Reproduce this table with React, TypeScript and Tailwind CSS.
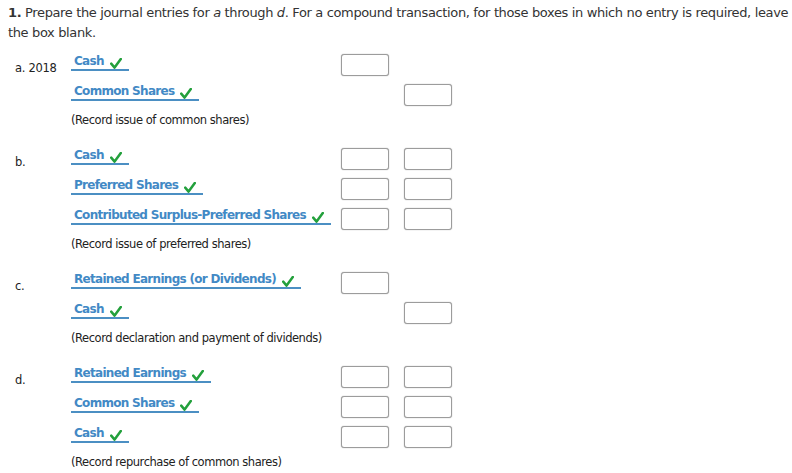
import React from "react";

type Row = { label?: string; side?: "dr" | "cr"; note?: string };
type Entry = { letter: string; rows: Row[]; note: string };

const ENTRIES: Entry[] = [
  {
    letter: "a. 2018",
    rows: [
      { label: "Cash", side: "dr" },
      { label: "Common Shares", side: "cr" },
    ],
    note: "(Record issue of common shares)",
  },
  {
    letter: "b.",
    rows: [
      { label: "Cash", side: "dr" },
      { label: "Preferred Shares", side: "cr" },
      { label: "Contributed Surplus-Preferred Shares", side: "cr" },
    ],
    note: "(Record issue of preferred shares)",
  },
  {
    letter: "c.",
    rows: [
      { label: "Retained Earnings (or Dividends)", side: "dr" },
      { label: "Cash", side: "cr" },
    ],
    note: "(Record declaration and payment of dividends)",
  },
  {
    letter: "d.",
    rows: [
      { label: "Retained Earnings", side: "dr" },
      { label: "Common Shares", side: "dr" },
      { label: "Cash", side: "cr" },
    ],
    note: "(Record repurchase of common shares)",
  },
];

// b and d show both boxes on every line
const BOTH = new Set(["b.", "d."]);

export default function App() {
  return (
    <div className="w-[792px] min-h-[473px] bg-white pl-[8px] pt-[3px] text-[#333]">
      <p className="w-[784px] text-[13px] leading-[20px] font-['DejaVu_Sans',Verdana,sans-serif] tracking-[-0.36px]">
        <b>1.</b> Prepare the journal entries for <i>a</i> through <i>d</i>. For a compound transaction, for those boxes in which no entry is required, leave the box blank.
      </p>

      <div className="mt-[7px]">
        {ENTRIES.map((e) => (
          <Section key={e.letter} entry={e} both={BOTH.has(e.letter)} />
        ))}
      </div>
    </div>
  );
}

function Section({ entry, both }: { entry: Entry; both: boolean }) {
  return (
    <div className="flex ml-[7px] mb-[14px]">
      <div className="w-[56px] shrink-0 pt-[8px] text-[11.5px] leading-[20px] text-[#222] font-['DejaVu_Sans',sans-serif] tracking-[-0.3px]">
        {entry.letter}
      </div>
      <div className="flex flex-col">
        {entry.rows.map((r, i) => (
          <div key={i} className="flex h-[30px]">
            <div className="w-[270px] shrink-0 pt-[4px] flex items-start">
              <AccountLabel text={r.label ?? ""} />
            </div>
            <div className="w-[48px] shrink-0 pt-[4px]">
              {(both || r.side === "dr") && <AmountBox />}
            </div>
            <div className="w-[48px] ml-[15px] shrink-0 pt-[4px]">
              {(both || r.side === "cr") && <AmountBox />}
            </div>
          </div>
        ))}
        <div className="h-[20px] leading-[20px] text-[11.5px] text-[#222] font-['DejaVu_Sans',sans-serif] tracking-[-0.45px]">
          {entry.note}
        </div>
      </div>
    </div>
  );
}

function AccountLabel({ text }: { text: string }) {
  return (
    <div className="flex items-end pl-[3px] pr-[7px] pb-[1px] border-b-2 border-[#4b8fc3]">
      <span className="text-[12px] leading-[14px] font-bold text-[#4289c5] font-['DejaVu_Sans',Verdana,sans-serif] tracking-[-0.7px] whitespace-nowrap">
        {text}
      </span>
      <CheckMark />
    </div>
  );
}

function CheckMark() {
  return (
    <svg width="12" height="11" viewBox="0 0 12 11" className="ml-[6px] mb-[-1px] shrink-0">
      <path d="M1.2 5.6 L4.6 9.6 L10.8 1" fill="none" stroke="#23a03c" strokeWidth="2.5" strokeLinecap="round" strokeLinejoin="round" />
    </svg>
  );
}

function AmountBox() {
  return (
    <div className="w-[48px] h-[22px] rounded-[3px] border border-[#9c9c9c] bg-white shadow-[0_0_1px_#8a8a8a]" />
  );
}
